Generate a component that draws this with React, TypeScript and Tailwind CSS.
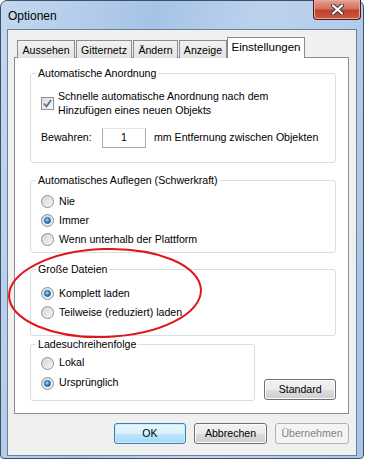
import React from 'react';

const Radio: React.FC<{ checked?: boolean }> = ({ checked }) => (
  <span className="w-[13px] h-[13px] rounded-full border border-[#8e8f8f] bg-[linear-gradient(135deg,#d4d4d4,#f8f8f8)] flex items-center justify-center shrink-0">
    {checked && (
      <span className="w-[7px] h-[7px] rounded-full bg-[radial-gradient(circle_at_40%_35%,#b6e4ff_0%,#3d93d8_45%,#0e4d8f_100%)] border border-[#1b5c9c]" />
    )}
  </span>
);

const RadioRow: React.FC<{ label: string; checked?: boolean; h: string }> = ({ label, checked, h }) => (
  <div className={`flex items-center gap-[5px] ${h}`}>
    <Radio checked={checked} />
    <span>{label}</span>
  </div>
);

const Group: React.FC<{ title: string; className: string; children: React.ReactNode }> = ({ title, className, children }) => (
  <div className={`relative border border-[#d5dfe5] rounded-[3px] pl-[10px] ${className}`}>
    <span className="absolute -top-[7px] left-[5px] bg-white px-[2px] leading-[13px]">{title}</span>
    {children}
  </div>
);

const Button: React.FC<{ label: string; variant?: 'default' | 'disabled' | 'normal'; className?: string }> = ({ label, variant = 'normal', className = '' }) => {
  const base = 'h-[21px] rounded-[3px] border flex items-center justify-center';
  const look =
    variant === 'default'
      ? 'border-[#3c7fb1] bg-[linear-gradient(#eaf6fd_0%,#d9f0fc_50%,#bee6fd_51%,#a7d9f5_100%)] shadow-[inset_0_0_0_1px_#c7ecfd]'
      : variant === 'disabled'
      ? 'border-[#adb2b5] bg-[#f4f4f4] text-[#838383]'
      : 'border-[#707070] bg-[linear-gradient(#f2f2f2_0%,#ebebeb_50%,#dddddd_51%,#cfcfcf_100%)] shadow-[inset_0_0_0_1px_#fcfcfc]';
  return <div className={`${base} ${look} ${className}`}>{label}</div>;
};

const tabs = [
  { label: 'Aussehen', w: 'w-[58px]', ml: 'ml-0' },
  { label: 'Gitternetz', w: 'w-[56px]', ml: 'ml-[1px]' },
  { label: 'Ändern', w: 'w-[45px]', ml: 'ml-[1px]' },
  { label: 'Anzeige', w: 'w-[48px]', ml: 'ml-[1px]' },
];

export default function App() {
  return (
    <div className="w-[366px] h-[460px] bg-white font-['Liberation_Sans',Arial,sans-serif] text-[10.6px] text-black">
      <div className="relative w-[364px] h-[459px] rounded-t-[7px] rounded-b-[4px] border border-[#3e4f66] bg-[linear-gradient(100deg,#c3d8f0_0%,#a6c3e6_35%,#bcd3ee_60%,#a8c5e6_100%)] flex flex-col">
        {/* title bar */}
        <div className="h-[28px] flex items-start justify-between shrink-0">
          <span className="text-[12px] pl-[7px] pt-[8px] leading-[14px]">Optionen</span>
          <div className="-mt-[1px] mr-[2px] w-[48px] h-[20px] rounded-b-[4px] border border-t-0 border-[#4a1a14] bg-[linear-gradient(#e7a096_0%,#d4705e_45%,#c2402a_55%,#c95b42_100%)] shadow-[inset_0_0_0_1px_#e9a89c] flex items-center justify-center">
            <svg width="13" height="11" viewBox="0 0 13 11">
              <path d="M2 1.5 L11 9.5 M11 1.5 L2 9.5" stroke="#3c3c3c" strokeWidth="4.2" strokeLinecap="round" />
              <path d="M2 1.5 L11 9.5 M11 1.5 L2 9.5" stroke="#ffffff" strokeWidth="2.2" strokeLinecap="round" />
            </svg>
          </div>
        </div>

        {/* client area */}
        <div className="flex-1 mx-[6px] mb-[2px] border border-[#6e7f95] bg-[#f0f0f0] pt-[7px] pl-[6px] pr-[7px] flex flex-col">
          {/* tabs */}
          <div className="flex items-end h-[21px] -mb-[1px] pl-[3px] relative z-10">
            {tabs.map((t) => (
              <div
                key={t.label}
                className={`${t.w} ${t.ml} h-[18px] border border-b-0 border-[#898c95] bg-[linear-gradient(#f2f2f2,#e3e3e3)] flex items-center justify-center pt-[2px]`}
              >
                {t.label}
              </div>
            ))}
            <div className="w-[78px] h-[21px] border border-b-0 border-[#898c95] bg-white flex items-center justify-center text-[11.5px]">
              Einstellungen
            </div>
          </div>

          {/* panel */}
          <div className="h-[357px] border border-[#898c95] bg-white pl-[15px] pr-[12px] pt-[15px] flex flex-col">
            <Group title="Automatische Anordnung" className="h-[90px] pt-[15px]">
              <div className="flex items-center gap-[4px]">
                <span className="w-[13px] h-[13px] border border-[#8e8f8f] bg-[linear-gradient(135deg,#dcdcdc,#fafafa)] flex items-center justify-center shrink-0">
                  <svg width="11" height="11" viewBox="0 0 11 11">
                    <path d="M2 5.5 L4.5 8.5 L9 2" fill="none" stroke="#5a6f96" strokeWidth="1.8" />
                  </svg>
                </span>
                <div className="leading-[14px]">
                  <div>Schnelle automatische Anordnung nach dem</div>
                  <div>Hinzufügen eines neuen Objekts</div>
                </div>
              </div>
              <div className="flex items-center mt-[11px]">
                <span className="w-[61px]">Bewahren:</span>
                <div className="w-[44px] h-[20px] border border-[#abadb3] border-t-[#e2e3ea] bg-white flex items-center justify-center">1</div>
                <span className="ml-[8px]">mm Entfernung zwischen Objekten</span>
              </div>
            </Group>

            <Group title="Automatisches Auflegen (Schwerkraft)" className="mt-[17px] h-[73px] pt-[11px]">
              <RadioRow label="Nie" h="h-[19px]" />
              <RadioRow label="Immer" h="h-[19px]" checked />
              <RadioRow label="Wenn unterhalb der Plattform" h="h-[19px]" />
            </Group>

            <Group title="Große Dateien" className="mt-[16px] h-[67px] pt-[14px]">
              <RadioRow label="Komplett laden" h="h-[19px]" checked />
              <RadioRow label="Teilweise (reduziert) laden" h="h-[19px]" />
            </Group>

            <div className="flex items-end mt-[8px]">
              <Group title="Ladesuchreihenfolge" className="w-[226px] h-[57px] pt-[8px]">
                <RadioRow label="Lokal" h="h-[20px]" />
                <RadioRow label="Ursprünglich" h="h-[20px]" checked />
              </Group>
              <Button label="Standard" className="w-[72px] ml-[9px] mb-[1px]" />
            </div>
          </div>

          {/* dialog buttons */}
          <div className="flex justify-end gap-[8px] mt-[9px]">
            <Button label="OK" variant="default" className="w-[72px]" />
            <Button label="Abbrechen" className="w-[73px]" />
            <Button label="Übernehmen" variant="disabled" className="w-[74px]" />
          </div>
        </div>

        {/* red annotation ellipse */}
        <svg className="absolute left-0 top-0 pointer-events-none" width="364" height="459">
          <ellipse cx="104" cy="292" rx="96" ry="44" fill="none" stroke="#e0161b" strokeWidth="2" transform="rotate(-2 104 292)" />
        </svg>
      </div>
    </div>
  );
}
